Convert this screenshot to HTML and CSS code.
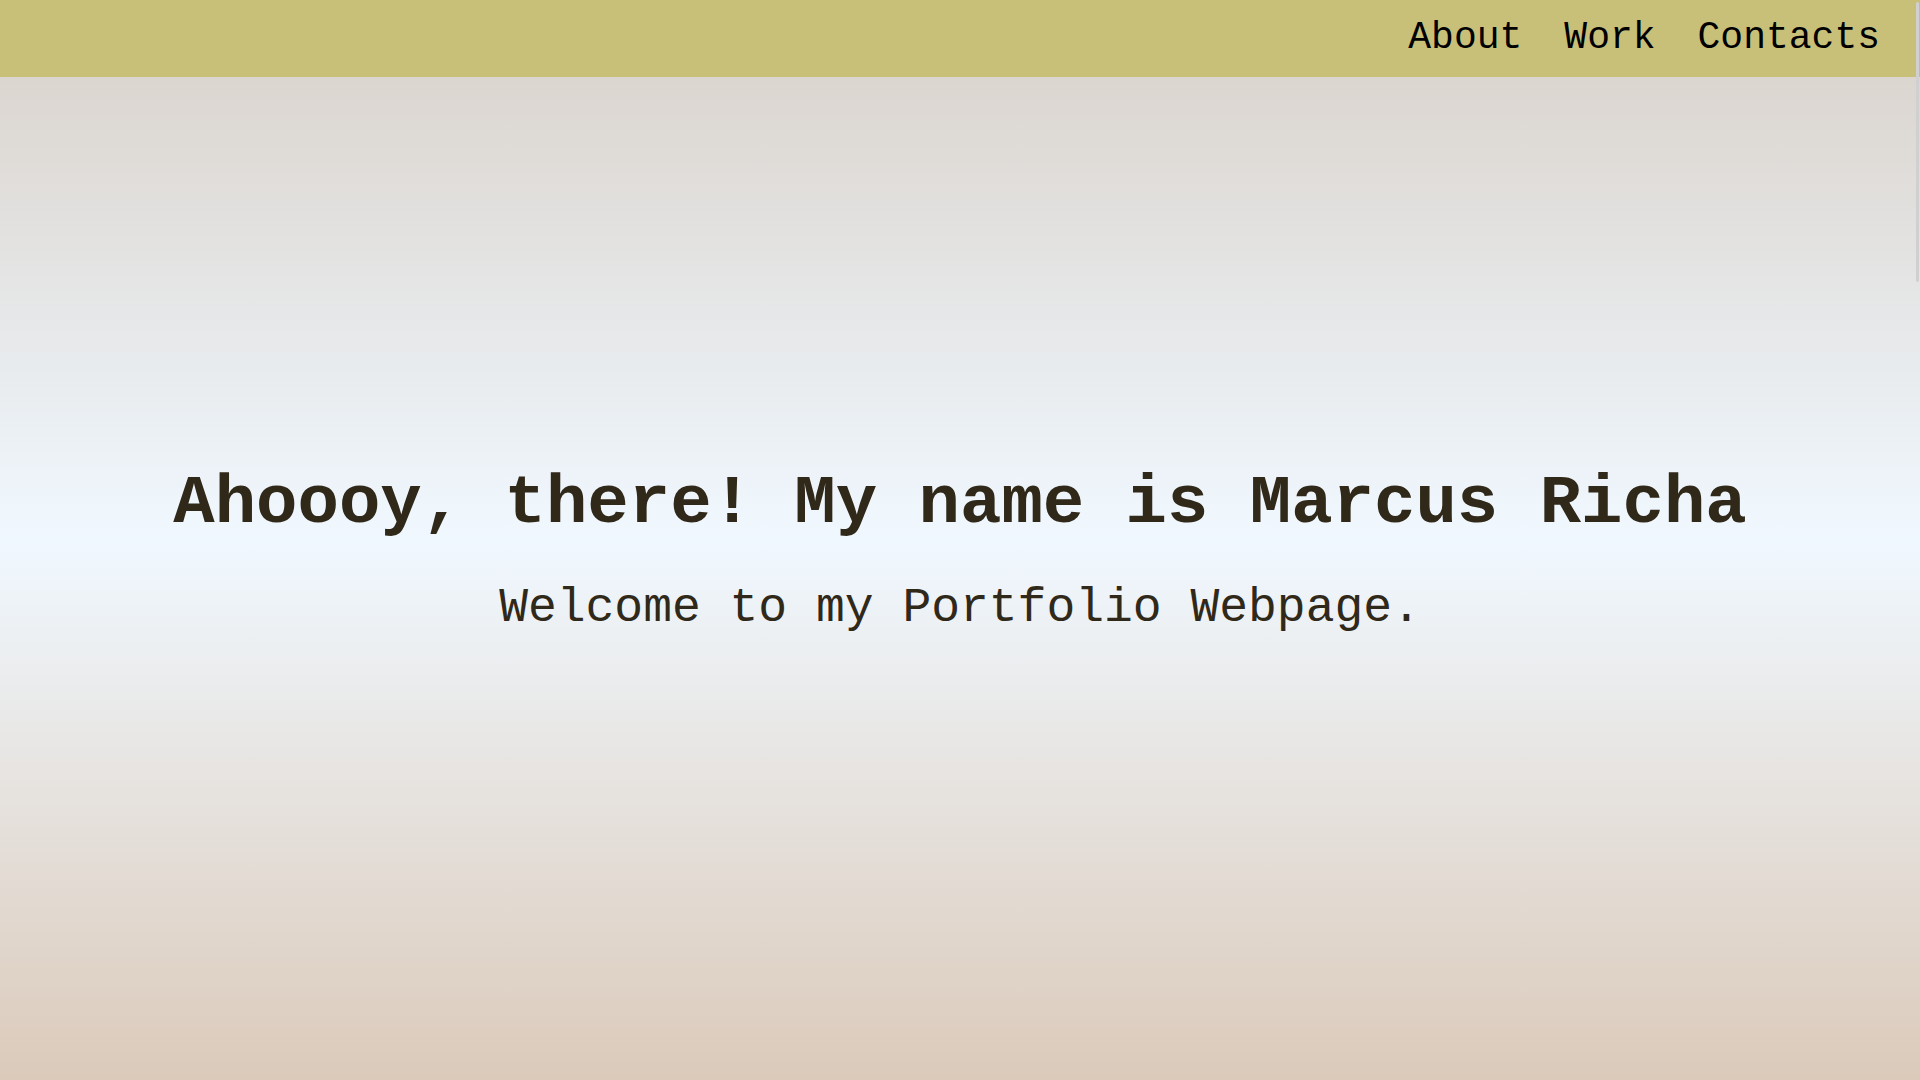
FILE: index.html
```html
<!DOCTYPE html>
<html lang="en">
<head>
<meta charset="utf-8">
<meta name="viewport" content="width=device-width, initial-scale=1">
<title>Marcus Richa</title>
<link rel="stylesheet" href="styles.css">
</head>
<body>
<header class="navbar">
  <nav class="nav-links" aria-label="Main">
    <a href="#about">About</a>
    <a href="#work">Work</a>
    <a href="#contacts">Contacts</a>
  </nav>
</header>
<main class="hero">
  <h1 class="hero-title">Ahoooy, there! My name is Marcus Richa</h1>
  <p class="hero-text">Welcome to my Portfolio Webpage.</p>
</main>
<div class="scroll-thumb" aria-hidden="true"></div>
</body>
</html>
```
FILE: styles.css
```css
* {
  box-sizing: border-box;
  margin: 0;
}

body {
  display: flex;
  flex-direction: column;
  min-height: 100vh;
  font-family: "Liberation Mono", "Courier New", monospace;
  color: #30291a;
  background: linear-gradient(#d8d0c8, #f0f8ff, #dbcaba);
}

.navbar {
  padding: 16px 40px 17px;
  background: #c8bf79;
}

.nav-links {
  display: flex;
  flex-wrap: wrap;
  justify-content: flex-end;
  gap: 42px;
  font-size: 38px;
  line-height: 44px;
}

.nav-links a {
  color: #000;
  text-decoration: none;
}

.hero {
  flex: 1;
  display: flex;
  flex-direction: column;
  align-items: center;
  justify-content: center;
  gap: 36px;
  padding: 0 24px 58px;
  text-align: center;
}

.hero-title {
  font-size: 69px;
  line-height: 80px;
}

.hero-text {
  font-size: 48px;
  line-height: 56px;
}

/* Slim scroll indicator floating over the right edge */
.scroll-thumb {
  position: absolute;
  top: 2px;
  right: 1px;
  width: 3px;
  height: 280px;
  border-radius: 2px;
  background: #d0d0d0;
}
```
